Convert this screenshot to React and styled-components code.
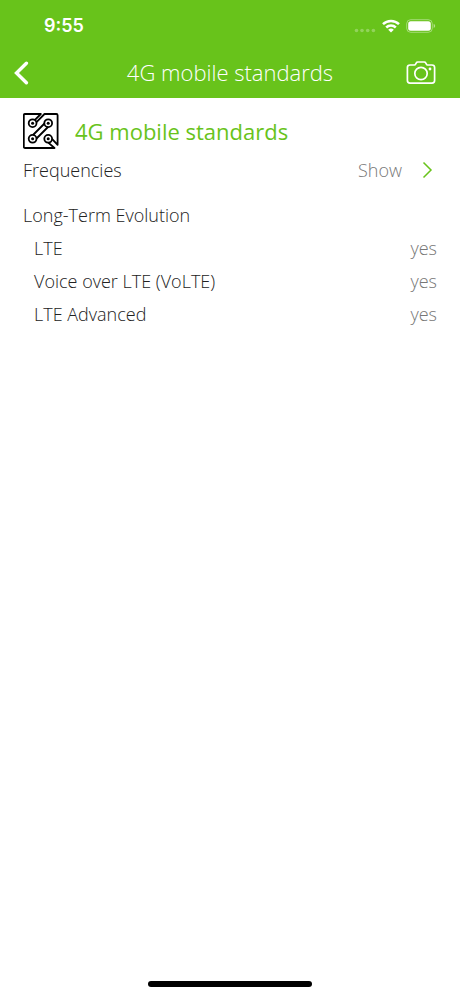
import React from "react";
import styled, { createGlobalStyle } from "styled-components";

const Global = createGlobalStyle`
  *, *::before, *::after { box-sizing: border-box; }
  body { margin: 0; background: #fff; font-family: "Open Sans", sans-serif; font-weight: 300; }
`;

const Screen = styled.div`
  min-height: 100vh;
  display: flex;
  flex-direction: column;
  background: #fff;
`;

const Header = styled.header`
  background: #68c31b;
  color: #fff;
`;

const StatusBar = styled.div`
  height: 48px;
  padding: 3px 24px 0 44px;
  display: flex;
  align-items: center;
  justify-content: space-between;
`;

const Time = styled.time`
  font: 600 18px/24px Inter, sans-serif;
`;

const Indicators = styled.div`
  display: flex;
  align-items: center;
  gap: 6px;
`;

const NavBar = styled.div`
  height: 50px;
  padding: 0 24px 0 14px;
  display: grid;
  grid-template-columns: 30px 1fr 30px;
  align-items: center;
`;

const IconButton = styled.button`
  display: flex;
  align-items: center;
  justify-content: ${(p) => (p.$end ? "flex-end" : "flex-start")};
  height: 44px;
  padding: 0;
  border: 0;
  background: none;
  color: inherit;
  cursor: pointer;
`;

const Title = styled.h1`
  margin: 0;
  padding: 0 0 2px 10px;
  text-align: center;
  font-size: 22px;
  line-height: 30px;
  font-weight: 300;
`;

const Content = styled.main`
  flex: 1;
  padding: 15px 23px;
`;

const SectionHead = styled.div`
  display: flex;
  align-items: center;
  gap: 16px;
  height: 36px;
`;

const SectionTitle = styled.h2`
  margin: 0;
  color: #68c31b;
  font-size: 22px;
  line-height: 30px;
  font-weight: 400;
`;

const Row = styled.div`
  display: flex;
  align-items: center;
  justify-content: space-between;
  min-height: 33px;
  padding-left: ${(p) => (p.$nested ? 11 : 0)}px;
  font-size: 18px;
  line-height: 24px;
  color: #222;
`;

const FrequencyRow = styled(Row)`
  margin-top: 4px;
`;

const Value = styled.span`
  color: #777;
`;

const ShowButton = styled.button`
  display: flex;
  align-items: center;
  gap: 20px;
  padding: 0 4px 0 0;
  border: 0;
  background: none;
  color: #777;
  font: inherit;
  cursor: pointer;
`;

const Group = styled.section`
  margin-top: 12px;
`;

const GroupTitle = styled(Row).attrs({ as: "h3" })`
  margin: 0;
  font-weight: 300;
`;

const HomeArea = styled.footer`
  display: flex;
  justify-content: center;
  padding-bottom: 9px;
`;

const HomeBar = styled.div`
  width: 164px;
  height: 6px;
  border-radius: 3px;
  background: #000;
`;

const features = ["LTE", "Voice over LTE (VoLTE)", "LTE Advanced"];

const SignalIcon = () => (
  <svg width="22" height="14" viewBox="0 0 22 14" fill="#fff" opacity="0.28" aria-hidden="true">
    {[2.5, 8, 13.7, 19.4].map((x) => (
      <circle key={x} cx={x} cy="11.5" r="1.8" />
    ))}
  </svg>
);

const WifiIcon = () => (
  <svg width="18" height="14" viewBox="0 0 18 14" fill="none" stroke="#fff" strokeWidth="2.5" aria-hidden="true">
    <path d="M1 5.2a11.4 11.4 0 0 1 16 0" />
    <path d="M4.2 8.5a6.8 6.8 0 0 1 9.6 0" />
    <path d="M9 13.6 6.2 10.8a4 4 0 0 1 5.6 0Z" fill="#fff" stroke="none" />
  </svg>
);

const BatteryIcon = () => (
  <svg width="30" height="14" viewBox="0 0 30 14" aria-hidden="true">
    <rect x="0.7" y="0.7" width="25.6" height="12.6" rx="4" fill="none" stroke="#fff" strokeOpacity="0.4" />
    <rect x="2.2" y="2.2" width="22.6" height="9.6" rx="2.5" fill="#fff" />
    <path d="M27.7 4.8q3 2.2 0 4.4Z" fill="#fff" fillOpacity="0.5" />
  </svg>
);

const BackIcon = () => (
  <svg width="15" height="24" viewBox="0 0 15 24" fill="none" stroke="#fff" strokeWidth="3.4" strokeLinecap="round" aria-hidden="true">
    <path d="M12.4 2.2 2.5 12l9.9 9.8" />
  </svg>
);

const CameraIcon = () => (
  <svg width="30" height="24" viewBox="0 0 30 24" fill="none" stroke="#fff" strokeWidth="1.7" strokeLinejoin="round" aria-hidden="true">
    <path d="M4 4h4.5q.7 0 1.1-.8l.7-1.3Q10.7 1 11.8 1h6.4q1.1 0 1.5.9l.7 1.3q.4.8 1.100.8H26q2.600 0 2.600 2.600v13Q28.600 22.200 26 22.200H4q-2.600 0-2.600-2.600v-13Q1.400 4 4 4Z" />
    <circle cx="15" cy="12.5" r="6.2" />
    <circle cx="24" cy="8" r="1.400" fill="#fff" stroke="none" />
  </svg>
);

const circuitPads = [[9.6, 10.2], [25.2, 10.2], [9.6, 25.8], [25.2, 25.8]];

const CircuitIcon = () => (
  <svg width="36" height="36" viewBox="0 0 36 36" fill="none" stroke="#000" strokeWidth="1.8" strokeLinejoin="round" aria-hidden="true">
    <path d="M12 6.900 17.800 1H2Q.8 1 .8 2.200v31.600Q.8 35 2 35h29.500l-6.200-5.400" />
    <path d="M13.500 9.200 21.500 1H33.400Q34.600 1 34.600 2.200V31.800l-5.600-6" />
    <path d="M21.500 10.500 10 22M25 14 13.500 25.500" />
    {circuitPads.map(([x, y]) => (
      <g key={`${x}-${y}`}>
        <circle cx={x} cy={y} r="3.900" />
        <circle cx={x} cy={y} r="1.500" fill="#000" stroke="none" />
      </g>
    ))}
  </svg>
);

const NextIcon = () => (
  <svg width="11" height="18" viewBox="0 0 11 18" fill="none" stroke="#68c31b" strokeWidth="1.5" aria-hidden="true">
    <path d="m1.5 1.5 7.5 7.5-7.5 7.5" />
  </svg>
);

export default function App() {
  return (
    <>
      <Global />
      <Screen>
        <Header>
          <StatusBar>
            <Time>9:55</Time>
            <Indicators>
              <SignalIcon />
              <WifiIcon />
              <BatteryIcon />
            </Indicators>
          </StatusBar>
          <NavBar>
            <IconButton aria-label="Back"><BackIcon /></IconButton>
            <Title>4G mobile standards</Title>
            <IconButton $end aria-label="Camera"><CameraIcon /></IconButton>
          </NavBar>
        </Header>
        <Content>
          <SectionHead>
            <CircuitIcon />
            <SectionTitle>4G mobile standards</SectionTitle>
          </SectionHead>
          <FrequencyRow>
            <span>Frequencies</span>
            <ShowButton>Show<NextIcon /></ShowButton>
          </FrequencyRow>
          <Group>
            <GroupTitle>Long-Term Evolution</GroupTitle>
            {features.map((name) => (
              <Row key={name} $nested>
                <span>{name}</span>
                <Value>yes</Value>
              </Row>
            ))}
          </Group>
        </Content>
        <HomeArea><HomeBar /></HomeArea>
      </Screen>
    </>
  );
}
